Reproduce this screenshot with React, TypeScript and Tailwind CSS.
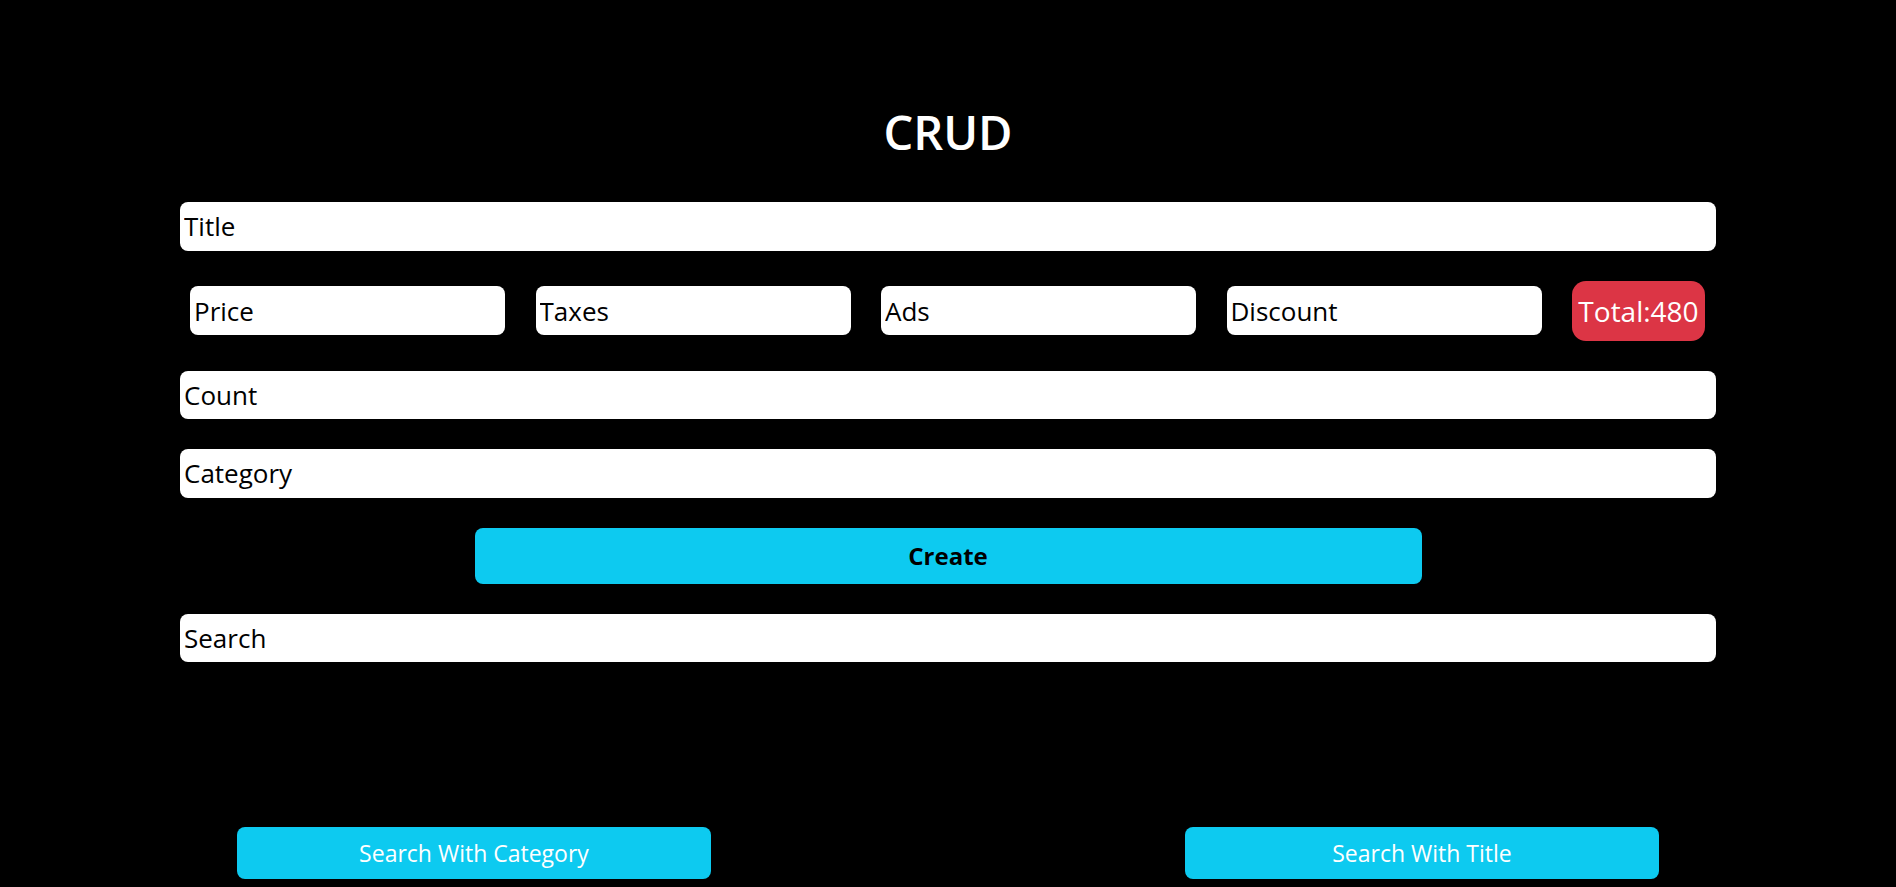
import React from 'react';

const font = { fontFamily: '"Open Sans", "Noto Sans", sans-serif' };

const Field = ({ label, className = '' }: { label: string; className?: string }) => (
  <input
    placeholder={label}
    className={`h-[48.5px] rounded-[8px] bg-white px-[4px] text-[26px] text-black placeholder:text-black outline-none ${className}`}
  />
);

export default function App() {
  return (
    <div className="min-h-[887px] w-full bg-black" style={font}>
      <div className="flex flex-col items-center pt-[104px]">
        <h2 className="text-[47px] font-semibold leading-[56px] text-white">CRUD</h2>
      </div>

      <div className="mt-[42px] flex flex-col gap-[30px] px-[180px]">
        <Field label="Title" className="w-full" />

        <div className="flex items-center gap-[30.5px] pl-[10px]">
          <Field label="Price" className="w-[315px]" />
          <Field label="Taxes" className="w-[315px]" />
          <Field label="Ads" className="w-[315px]" />
          <Field label="Discount" className="w-[315px]" />
          <div className="flex h-[60px] w-[133px] items-center justify-center rounded-[14px] bg-[#dc3545] text-[28px] text-white">
            Total:480
          </div>
        </div>

        <Field label="Count" className="w-full" />
        <Field label="Category" className="w-full" />

        <div className="flex justify-center">
          <button className="h-[56px] w-[947px] rounded-[8px] bg-[#0dcaf0] text-[24px] font-bold text-black">
            Create
          </button>
        </div>

        <Field label="Search" className="w-full" />
      </div>

      <div className="mt-[165px] flex justify-around pb-[8px]">
        <button className="h-[52px] w-[474px] rounded-[8px] bg-[#0dcaf0] text-[23px] text-white">
          Search With Category
        </button>
        <button className="h-[52px] w-[474px] rounded-[8px] bg-[#0dcaf0] text-[23px] text-white">
          Search With Title
        </button>
      </div>
    </div>
  );
}
